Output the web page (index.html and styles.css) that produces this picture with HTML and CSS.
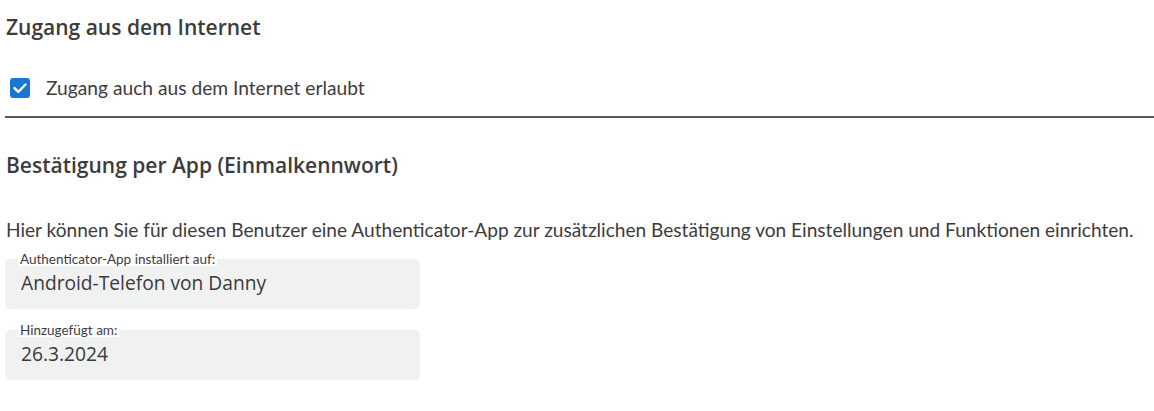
FILE: index.html
```html
<!DOCTYPE html>
<html lang="de">
<head>
<meta charset="utf-8">
<link rel="stylesheet" href="styles.css">
</head>
<body>
<div class="page">
  <section class="section">
    <h2 class="heading">Zugang aus dem Internet</h2>
    <label class="check">
      <span class="box"><svg viewBox="0 0 20 20" width="20" height="20"><path d="M4.5 10.2 L8.3 13.8 L15.5 6.5" fill="none" stroke="#fff" stroke-width="2.4" stroke-linecap="round" stroke-linejoin="round"/></svg></span>
      <span class="check-label">Zugang auch aus dem Internet erlaubt</span>
    </label>
  </section>
  <hr class="divider">
  <section class="section">
    <h2 class="heading heading-2">Bestätigung per App (Einmalkennwort)</h2>
    <p class="text">Hier können Sie für diesen Benutzer eine Authenticator-App zur zusätzlichen Bestätigung von Einstellungen und Funktionen einrichten.</p>
    <div class="field">
      <span class="field-label">Authenticator-App installiert auf:</span>
      <span class="field-value">Android-Telefon von Danny</span>
    </div>
    <div class="field">
      <span class="field-label">Hinzugefügt am:</span>
      <span class="field-value">26.3.2024</span>
    </div>
  </section>
</div>
</body>
</html>
```
FILE: styles.css
```css
html, body {
  margin: 0;
  padding: 0;
  background: #fff;
}
.page {
  font-family: Lato, "Liberation Sans", sans-serif;
  color: #3c3c3c;
  padding: 0 0 0 5px;
}
.section {
  padding-left: 1px;
}
.heading {
  margin: 0;
  padding-top: 13px;
  font-family: "Open Sans", "Noto Sans", sans-serif;
  font-size: 21px;
  line-height: 28px;
  font-weight: 600;
  color: #3c3c3c;
}
.check {
  display: flex;
  align-items: center;
  gap: 16px;
  margin-top: 35px;
  padding-left: 4px;
}
.box {
  width: 20px;
  height: 20px;
  border-radius: 3px;
  background: #1976d2;
  display: flex;
}
.check-label {
  font-size: 19.2px;
  line-height: 24px;
}
.divider {
  margin: 16px 0 0 0;
  border: 0;
  height: 2px;
  background: #5a5a5a;
}
.heading-2 {
  padding-top: 33px;
}
.text {
  margin: 0;
  padding-top: 39px;
  font-size: 19.1px;
  line-height: 24px;
}
.field {
  position: relative;
  width: 415px;
  height: 50px;
  margin-left: -1px;
  margin-top: 21px;
  border-radius: 5px;
  background: #f0f1f1;
  box-sizing: border-box;
  padding: 10px 16px 0 16px;
  display: flex;
  flex-direction: column;
}
.text + .field {
  margin-top: 17px;
}
.field-label {
  position: absolute;
  left: 13px;
  top: -7px;
  padding: 0 2px;
  background: #fff;
  font-size: 13.5px;
  line-height: 14px;
  color: #3c3c3c;
}
.field-value {
  font-family: "Open Sans", "Noto Sans", sans-serif;
  font-size: 19.2px;
  line-height: 28px;
  color: #3a3a3a;
}
```
